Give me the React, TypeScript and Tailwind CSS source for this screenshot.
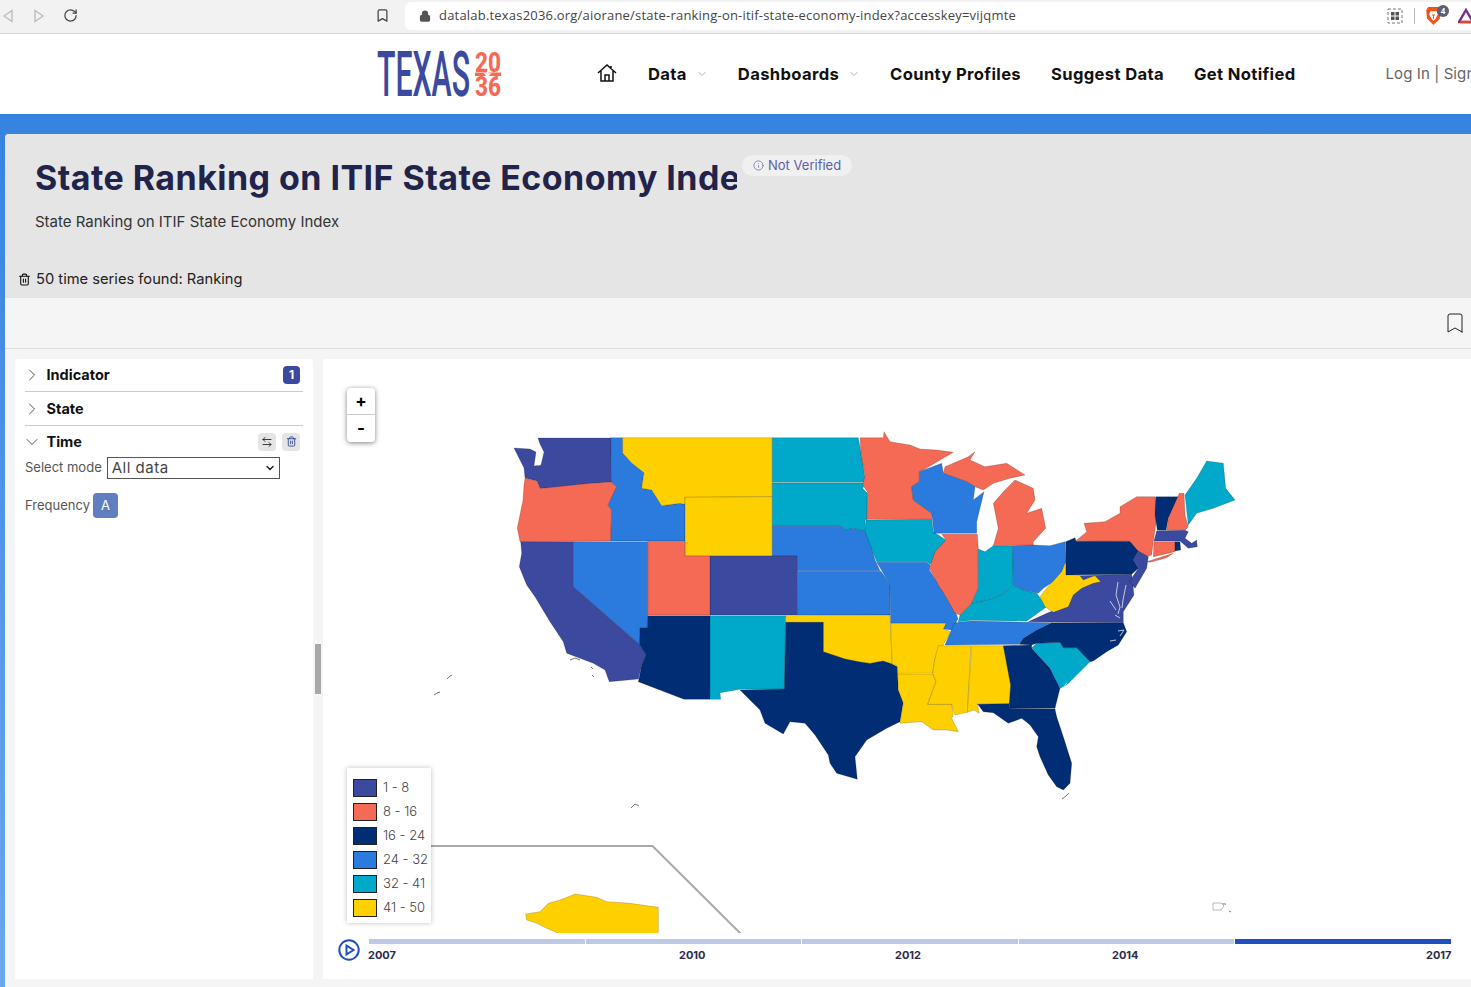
import React from "react";
import {
  ArrowLeftRight,
  Bookmark,
  ChevronDown,
  ChevronRight,
  Info,
  Lock,
  RotateCw,
  Trash2,
} from "lucide-react";

const INDIGO = "#3b4a9f";
const CORAL = "#f46a55";
const NAVY = "#002d74";
const BLUE = "#2b7bdf";
const TEAL = "#00a9c9";
const YELLOW = "#ffd000";

// state outlines in page pixels, the svg viewBox starts at the panel's corner
const states: [string, string][] = [
  [INDIGO, "538,438 611,438 611.7,482 587,484 567,487 540,488.5 537,481 525,478 524,468 520,460 514,448 530,449 536,452 534,466 541,465 544,452 540,444"],
  [CORAL, "525,478 537,481 540,488.5 587,483.5 611.7,482 617,487 608,505 611.7,510 610.7,541 520,541.7 517.3,528 523,500 524,485"],
  [BLUE, "610.7,437.7 622.7,437.7 622.7,453 631.7,463 644,472.7 641.7,488.3 651.7,490 661.7,505.7 680,503.3 685,504.3 685,541 610.7,541 611.7,510 608,505 616.7,486.7 611.7,482.3"],
  [YELLOW, "622.7,437.7 772.3,437.7 772.3,496.7 685,497.3 685,504.3 680,503.3 661.7,505.7 651.7,490 641.7,488.3 644,472.7 631.7,463 622.7,453"],
  [YELLOW, "685,497.3 772.3,496.7 772.3,556 685,556"],
  [TEAL, "772.3,437.7 858.3,437.7 861.7,456.7 865.7,482.3 772.3,482.3"],
  [TEAL, "772.3,483 865.7,483 862.7,488.3 867.3,493.3 867.3,519.3 865,520 866,531.7 853.3,528.3 846.7,530 840,526.3 772.3,526.3"],
  [BLUE, "772.3,526.3 840,526.3 846.7,530 853.3,528.3 866,531.7 870,541.7 875,560 880,570.7 797.3,570.7 797.3,556 772.3,556"],
  [INDIGO, "710,556 797.3,556 797.7,615 710,615"],
  [CORAL, "647.7,541.3 685,541.3 685,556 710,556 710,615 647.7,615"],
  [BLUE, "573.3,541.7 647.7,541.7 647.7,615 647.3,628 640,628 639.3,644.3 573.3,586.7"],
  [INDIGO, "520.7,541.7 573.3,541.7 573.3,586.7 639.3,644.3 646,655 641.7,665 638.3,679 609.3,681.7 605,670 593.3,663.3 566.7,653.3 563.3,641.7 550,621.7 535,596.7 526.7,585 519.3,566.7 521.7,553.3"],
  [NAVY, "647.7,615.7 710,615.7 710,699.3 684,699.3 638.3,681.7 641.7,665 646,655 639.3,644.3 640,628 647.3,628"],
  [TEAL, "710,615.7 785.7,615.7 784.3,689 740,689.3 720,692.7 720.7,699.3 710,699.3"],
  [BLUE, "797.3,571.3 881,571.3 885,577 890,585 890.3,615 797.7,615"],
  [YELLOW, "785.7,615.7 890,615 892,664 883,661 870,663.5 860,662 845,659 823.3,652 823.3,622.7 785.5,622.7"],
  [NAVY, "785.7,622.3 823.3,622.3 823.3,651.7 845,659 860,662 870,663.5 883,661 892,664 897.3,666.7 898.3,690 903.3,701.7 900,721.7 886.7,728.3 866.7,740 855,756.7 857.3,779.3 836.7,773.3 830,763.3 828.3,755 815,735 805,723.3 790,721.7 783.3,734 765,723.3 760,710 740,690 784.3,689"],
  [CORAL, "860,437.7 883.3,437.7 884,431.7 890,441.7 910,445 920,449 936.7,450 953.3,452.3 923.3,470 919.3,471.7 919.3,481.7 911.7,486.7 913.3,500 931.7,513.3 931.7,519.3 866.7,519.3 867.3,491.7 862.7,485 865,475 861,455"],
  [TEAL, "866,520 931.7,519.3 933.3,531.7 946,540 941.7,548.3 935,551.7 936,558.3 930,564.3 926.7,561.7 876.7,561.7 865,531.7"],
  [BLUE, "876.7,562.3 926.7,562.3 930,565 929.3,570 940,586.7 945,595 956.7,615 958,619 951.7,630 943.3,629 946,623.3 890.7,623.3 890,585 883.3,573.3"],
  [YELLOW, "890.7,623.3 946,623.3 943.3,629 950.7,631.7 943.3,645 935,658.3 932.7,673.3 897.7,673.3 897.3,665.7 892.3,664.3"],
  [YELLOW, "897.7,674 933.3,674.3 936,681.7 927.7,704.3 951.7,704.3 953.3,715 951.7,718.3 958.3,731.7 946.7,730 933.3,730 921.7,721.7 900,723.3 903.3,703.3 898.3,690"],
  [YELLOW, "938.3,645.7 971,645.7 967.3,712.3 955,715 951.7,704.3 927.7,704.3 936,681.7 932.7,673.3 935,658.3"],
  [YELLOW, "971.7,645.7 1003.3,645.7 1010.7,685 1009.3,703.7 977.3,704.3 979.3,713.3 974,710 967.3,712.3"],
  [NAVY, "1003.3,645.7 1031.7,645 1031.7,648.3 1050,668.3 1060,688.3 1055,708.3 1010,708.3 1009.3,703.7 1010.7,685"],
  [NAVY, "977.3,704.3 1009.3,703.7 1010,708.3 1055,709 1056.7,716.7 1063.3,736.7 1071.7,763.3 1070,783.3 1063.3,790 1056.7,786.7 1048.3,775 1040,756.7 1036.7,746.7 1038.3,736.7 1030,725 1021.7,718.3 1008.3,723.3 993.3,712.7 983.3,711.7 978.3,705"],
  [TEAL, "1031.7,647.7 1036.7,643.3 1060,642.3 1063.3,647.7 1076.7,647.7 1090,661.7 1081.7,670 1066.7,685 1060,688.3 1050,668.3"],
  [NAVY, "1051.7,622.7 1123.3,622.7 1126.7,631.7 1118.3,645 1106.7,651.7 1093.3,661 1090,661.7 1076.7,647.7 1063.3,647.7 1060,642.3 1036.7,643.3 1031.7,645 1019.3,644.3 1023.3,638.3 1036.7,630"],
  [BLUE, "958.3,622.3 971.7,621 1051.7,622.7 1036.7,630 1023.3,638.3 1019.3,644.3 945,645 950.7,631.7 954,623.3"],
  [TEAL, "958.3,621.7 960,615 971.7,603.3 993.3,598.3 1003.3,593.3 1013.3,585 1023.3,590 1036.7,593.3 1046.7,606.7 1026.7,621 971.7,620.3"],
  [CORAL, "941.7,534.3 977.3,534.3 978.3,548.3 978.3,588.3 971.7,603.3 960,615 955,613.3 945,595 939.3,586.7 929.3,568.3 935,551.7 946,540"],
  [TEAL, "978.3,549 985,551.7 993.3,545.7 1012.7,545.7 1013.3,585 1003.3,593.3 993.3,598.3 971.7,603.3 978.3,588.3"],
  [BLUE, "1012.7,545.7 1033.3,545 1050,545.7 1065,541.7 1065.7,561.7 1061.7,571.7 1053.3,581.7 1043.3,588.3 1038.3,593.3 1023.3,590 1013.3,585"],
  [CORAL, "993.3,545.7 998.3,528.3 993.3,503.3 1003.3,491.7 1015,480 1033.3,488.3 1035,500 1026.7,513.3 1041.7,508.3 1045.7,528.3 1033.3,541.7 1033.3,545"],
  [CORAL, "943.3,473.3 945,466.7 968.3,456.7 975,451.7 970,460 985,466.7 1006.7,463.3 1025,475 1010,478.3 993.3,483.3 983.3,490 975,486.7 966.7,481.7"],
  [BLUE, "919.3,471.7 941.7,463.3 943.3,473.3 966.7,481.7 975,486.7 973.3,500 984,491.7 976.7,521.7 976.7,533.3 934,533.3 931.7,513.3 913.3,500 911.7,486.7 919.3,481.7"],
  [INDIGO, "1079.3,575.7 1131.7,574.3 1134,595 1123.3,611.7 1123.3,622.7 1028.3,621.7 1046.7,613.3 1060,608"],
  [NAVY, "1065.7,541.7 1075,537.7 1076,541.3 1130,541.3 1138.3,551 1133.3,560 1138.3,568.3 1131.7,574.3 1065.7,575"],
  [CORAL, "1076,540.7 1086.7,531.7 1084,523.3 1105,521.7 1120,513.3 1120,506.7 1136.7,496.7 1155,496.7 1156.7,518.3 1153.3,541.7 1151.7,555 1146.7,556.7 1138.3,551 1130,541.3"],
  [CORAL, "1146.7,561.7 1173.3,553.3 1166.7,557.7 1150,562.3"],
  [NAVY, "1155.7,496.7 1178.3,496.7 1168.3,518.3 1166,530.3 1157.3,530.3 1155,515"],
  [CORAL, "1179.3,493.3 1184,493.3 1185,515 1188.3,526.7 1185,530.3 1166.7,530.3 1168.3,518.3"],
  [TEAL, "1185,495 1196.7,478.3 1206.7,461 1223.3,463.3 1225.7,488.3 1235,500 1213.3,508.3 1196.7,513.3 1188.3,525"],
  [INDIGO, "1156.7,531 1185,530.3 1188.3,531.7 1185,538.3 1191.7,543.3 1196.7,540 1197.3,546.7 1188.3,548.3 1180,541 1154,541"],
  [CORAL, "1154,541.7 1175,541.7 1175,551.7 1153.3,556.7"],
  [NAVY, "1175,541.7 1180,541.7 1180.7,550 1175,551"],
  [INDIGO, "1138.3,551 1148.3,556.7 1146.7,568.3 1135,588.3 1129.3,581.7 1138.3,568.3 1133.3,560"],
  [YELLOW, "1065.7,561.7 1065.7,575 1079.3,575 1083.3,580 1091.7,576.7 1095,575.7 1100.7,581.7 1093.3,583.3 1081.7,588.3 1073.3,595 1068.3,606.7 1053.3,612.3 1045,606.7 1040,596.7 1046.7,588.3 1061.7,571.7"],
  [YELLOW, "525.7,914 540,911.7 548.3,903.3 560,900 575,894 596.7,897.3 606.7,901.7 630,903.3 658.3,907.3 658.3,934 560,934 546.7,928.3 536.7,923.3 526.7,920"],
];

const specks = [
  "570,660 575,658 580,660",
  "591,667 593,669",
  "592,675 594,677",
  "447,679 450,676 452,675",
  "434,695 437,693 440,692",
  "631,808 635,804 639,806",
  "1222,904 1226,904",
  "1229,911 1231,912",
  "1062,799 1066,796 1069,793",
];

const coastCuts = [
  "1118,582 1116,595 1120,607 1118,614",
  "1126,585 1123,600 1122,608",
  "1110,601 1116,610",
  "1115,615 1120,618",
  "1118,631 1124,630 1120,636",
  "1110,641 1116,640",
  "540,446 542,452 537,458 539,466",
  "1067,683 1063,688",
];

const legend: [string, string][] = [
  [INDIGO, "1 - 8"],
  [CORAL, "8 - 16"],
  [NAVY, "16 - 24"],
  [BLUE, "24 - 32"],
  [TEAL, "32 - 41"],
  [YELLOW, "41 - 50"],
];

const navItems = [
  { label: "Data", drop: true },
  { label: "Dashboards", drop: true },
  { label: "County Profiles" },
  { label: "Suggest Data" },
  { label: "Get Notified" },
];

const UsMap = () => (
  <svg viewBox="323 359 1148 574" className="absolute inset-0 h-full w-full">
    <polyline
      points="431,846 652.5,846 741,934"
      fill="none"
      stroke="#a9a9a9"
      strokeWidth="2"
    />
    {states.map(([fill, points], i) => (
      <polygon
        key={i}
        points={points}
        fill={fill}
        stroke="#000"
        strokeOpacity="0.25"
        strokeWidth="0.7"
        strokeLinejoin="round"
      />
    ))}
    {coastCuts.map((points, i) => (
      <polyline
        key={i}
        points={points}
        fill="none"
        stroke="#fff"
        strokeWidth="0.7"
      />
    ))}
    {specks.map((points, i) => (
      <polyline
        key={i}
        points={points}
        fill="none"
        stroke="#666"
        strokeWidth="0.9"
      />
    ))}
    <path
      d="M1213 903h8l3 3-3 4h-8z"
      fill="none"
      stroke="#bbb"
      strokeWidth="1"
    />
  </svg>
);

const Logo = () => (
  <svg width="126" height="80" viewBox="0 0 126 80" className="shrink-0">
    <text
      x="0"
      y="62"
      fontFamily="Roboto, sans-serif"
      fontSize="63"
      fontWeight="500"
      fill="#3b4a9f"
      textLength="93"
      lengthAdjust="spacingAndGlyphs"
    >
      TEXAS
    </text>
    <text
      x="98"
      y="38"
      fontFamily="Roboto, sans-serif"
      fontSize="28"
      fontWeight="800"
      fill="#f46a55"
      textLength="26"
      lengthAdjust="spacingAndGlyphs"
    >
      20
    </text>
    <text
      x="98"
      y="62"
      fontFamily="Roboto, sans-serif"
      fontSize="28"
      fontWeight="800"
      fill="#f46a55"
      textLength="26"
      lengthAdjust="spacingAndGlyphs"
    >
      36
    </text>
    <rect x="98" y="38.5" width="26" height="3.5" fill="#f46a55" />
    <path
      d="M110.5 36.5l1.2 2.8h3l-2.4 1.8 1 3-2.8-1.8-2.8 1.8 1-3-2.4-1.8h3z"
      fill="#fff"
    />
  </svg>
);

const BrowserBar = () => (
  <div className="flex h-[34px] items-center overflow-hidden border-b border-[#d4d4d4] bg-[#f2f2f2] font-['Open_Sans',sans-serif]">
    <svg width="12" height="14" viewBox="0 0 12 14" className="ml-[2px] shrink-0 -translate-y-px">
      <path d="M10 1.5 2 7l8 5.5z" fill="none" stroke="#bdbdbd" strokeWidth="1.4" />
    </svg>
    <svg width="12" height="14" viewBox="0 0 12 14" className="ml-[19px] shrink-0 -translate-y-px">
      <path d="M2 1.5 10 7l-8 5.5z" fill="none" stroke="#bdbdbd" strokeWidth="1.4" />
    </svg>
    <RotateCw size={15} strokeWidth={2} className="ml-[18px] shrink-0 -translate-y-px text-[#444]" />
    <Bookmark size={15} strokeWidth={2} className="ml-[297px] shrink-0 -translate-y-px text-[#444]" />
    <div className="ml-[15px] flex h-[28px] min-w-0 flex-1 -translate-y-px items-center rounded-l-md bg-white pl-[14px]">
      <Lock size={12} strokeWidth={2.5} fill="currentColor" className="shrink-0 text-[#555]" />
      <span className="ml-[8px] w-[956px] shrink-0 text-[13px] tracking-[0.2px] whitespace-nowrap text-[#444]">
        datalab.texas2036.org/aiorane/state-ranking-on-itif-state-economy-index?accesskey=vijqmte
      </span>
      <svg width="16" height="16" viewBox="0 0 16 16" className="-ml-[8px] shrink-0">
        <rect x="1" y="1" width="14" height="14" fill="none" stroke="#777" strokeDasharray="3 2" />
        <rect x="4" y="4" width="3.5" height="3.5" fill="#555" />
        <rect x="8.5" y="4" width="3.5" height="3.5" fill="#555" />
        <rect x="4" y="8.5" width="3.5" height="3.5" fill="#555" />
        <rect x="8.5" y="8.5" width="3.5" height="3.5" fill="#555" />
      </svg>
      <div className="ml-[11px] h-[16px] w-px shrink-0 bg-[#bbb]" />
      <div className="relative ml-[10px] shrink-0">
        <svg width="17" height="20" viewBox="0 0 16 19" className="block">
          <path d="M3 1h10l2 3-1 8-6 6-6-6-1-8z" fill="#f2541b" />
          <path d="M5 5h6l1 3-2 4-2 2-2-2-2-4z" fill="#fff" />
          <path d="M6.5 8.5h3M8 9v3" stroke="#f2541b" strokeWidth="1" />
        </svg>
        <span className="absolute -top-[1px] left-[12px] flex h-[12px] w-[12px] items-center justify-center rounded-full bg-[#5a5f73] text-[8px] font-bold text-white">
          4
        </span>
      </div>
      <svg width="16" height="16" viewBox="0 0 16 16" className="ml-[16px] shrink-0">
        <path d="M8 2 15 14H1z" fill="none" stroke="#7b2d8e" strokeWidth="2.4" />
        <path d="M2 14h12" stroke="#e8452c" strokeWidth="2.4" />
      </svg>
    </div>
  </div>
);

const SiteHeader = () => (
  <header className="flex h-[80px] items-center overflow-hidden bg-white pl-[377px] font-['Inter',sans-serif] whitespace-nowrap">
    <Logo />
    <svg width="20" height="20" viewBox="0 0 20 20" className="ml-[94px] shrink-0 -translate-y-px">
      <path
        d="M1 10 10 2l9 8M4 8v10h12V8M8 18v-6h4v6M14 3v3"
        fill="none"
        stroke="#111"
        strokeWidth="1.5"
      />
    </svg>
    <nav className="ml-[31px] flex items-center gap-[30px] text-[16.6px] font-bold tracking-[0.35px] text-[#111]">
      {navItems.map((item) => (
        <div key={item.label} className="flex items-center">
          <span>{item.label}</span>
          {item.drop && (
            <ChevronDown size={12} strokeWidth={1.2} className="ml-[9px] text-[#777]" />
          )}
        </div>
      ))}
    </nav>
    <span className="ml-[90px] text-[15px] tracking-[0.1px] text-[#666]">
      Log In | Sign Up
    </span>
  </header>
);

const TitlePanel = () => (
  <section className="flex h-[164px] flex-col bg-[#e5e5e5] pl-[30px] text-[#1f2044]">
    <div className="flex items-start pt-[21px]">
      <h1 className="mt-[1px] w-[702px] overflow-hidden text-[34px] leading-[44px] font-bold tracking-[0.45px] whitespace-nowrap text-[#22234a]">
        State Ranking on ITIF State Economy Index
      </h1>
      <span className="ml-[5px] flex h-[21px] items-center gap-[4px] rounded-full bg-[#f0f0f0] px-[11px] text-[13px] text-[#5a60a8]">
        <Info size={11} strokeWidth={1.5} />
        Not Verified
      </span>
    </div>
    <p className="mt-[12px] text-[15px] leading-[20px] text-[#333]">
      State Ranking on ITIF State Economy Index
    </p>
    <div className="mt-[37px] -ml-[17px] flex items-center gap-[5px] text-[14.7px] leading-[20px] text-[#222]">
      <Trash2 size={13} strokeWidth={2} className="text-[#111]" />
      50 time series found: Ranking
    </div>
  </section>
);

const SidePanel = () => (
  <aside className="w-[298px] shrink-0 rounded-t bg-white px-[10px] text-[#111]">
    <div className="flex h-[33px] items-center border-b border-[#ccc]">
      <ChevronRight size={20} strokeWidth={1} className="-ml-[3px] text-[#333]" />
      <span className="ml-[4.5px] text-[14.5px] font-bold">Indicator</span>
      <span className="mr-[3px] ml-auto flex h-[18px] w-[17px] items-center justify-center rounded-sm bg-[#3b4a9f] text-[12px] font-bold text-white">
        1
      </span>
    </div>
    <div className="flex h-[34px] items-center border-b border-[#ccc]">
      <ChevronRight size={20} strokeWidth={1} className="-ml-[3px] text-[#333]" />
      <span className="ml-[4.5px] text-[14.5px] font-bold">State</span>
    </div>
    <div className="flex h-[31px] items-center">
      <ChevronDown size={20} strokeWidth={1} className="-ml-[3px] text-[#333]" />
      <span className="ml-[4.5px] text-[14.5px] font-bold">Time</span>
      <span className="ml-auto flex h-[18px] w-[18px] items-center justify-center rounded-sm bg-[#e5e5e5]">
        <ArrowLeftRight size={12} strokeWidth={1.6} />
      </span>
      <span className="mr-[3px] ml-[6px] flex h-[18px] w-[18px] items-center justify-center rounded-sm bg-[#e5e5e5]">
        <Trash2 size={11} strokeWidth={1.8} className="text-[#1f3f88]" />
      </span>
    </div>
    <div className="flex items-center">
      <span className="text-[13px] text-[#555]">Select mode</span>
      <div className="ml-[5px] flex h-[22px] w-[173px] items-center justify-between border border-[#555] pr-[3px] pl-[4px] text-[15px] tracking-[0.5px] text-[#444]">
        All data
        <ChevronDown size={12} strokeWidth={3} className="text-[#222]" />
      </div>
    </div>
    <div className="mt-[14px] flex items-center">
      <span className="text-[13px] text-[#555]">Frequency</span>
      <span className="ml-[3px] flex h-[25px] w-[25px] items-center justify-center rounded-sm bg-[#5f7fbf] text-[13px] text-white">
        A
      </span>
    </div>
  </aside>
);

const MapPanel = () => (
  <section className="flex-1 bg-white">
    <div className="relative h-[574px] overflow-hidden">
      <UsMap />
      <div className="absolute top-[29px] left-[24px] w-[28px] rounded-sm bg-white text-black shadow-[0_1px_5px_rgba(0,0,0,0.5)]">
        <div className="flex h-[27px] items-center justify-center border-b border-[#ccc] text-[17px] leading-none font-bold">
          +
        </div>
        <div className="flex h-[27px] items-center justify-center text-[17px] leading-none font-bold">
          -
        </div>
      </div>
      <div className="absolute top-[409px] left-[24px] flex h-[155px] w-[84px] flex-col gap-[6px] bg-white pt-[11px] pl-[6px] shadow-[0_0_5px_rgba(0,0,0,0.25)]">
        {legend.map(([color, label]) => (
          <div key={label} className="flex h-[18px] items-center gap-[6px]">
            <span
              className="h-[18px] w-[24px] border border-[#222]"
              style={{ backgroundColor: color }}
            />
            <span className="text-[13px] font-light text-[#444]">{label}</span>
          </div>
        ))}
      </div>
    </div>
    <div className="flex pl-[15px]">
      <svg width="22" height="22" viewBox="0 0 22 22" className="mt-[6px] shrink-0">
        <circle cx="11" cy="11" r="9.7" fill="none" stroke="#1f4fbd" strokeWidth="2" />
        <path d="M8.5 6.5 15.5 11l-7 4.5z" fill="none" stroke="#1f4fbd" strokeWidth="2" />
      </svg>
      <div className="ml-[9px] w-[1082px] pt-[6px]">
        <div className="flex h-[5px] gap-[1px]">
          <div className="flex-1 bg-[#bdcae5]" />
          <div className="flex-1 bg-[#bdcae5]" />
          <div className="flex-1 bg-[#bdcae5]" />
          <div className="flex-1 bg-[#bdcae5]" />
          <div className="flex-1 bg-[#1f4fbd]" />
        </div>
        <div className="mt-[4px] -ml-px flex text-[11px] leading-[14px] font-bold text-[#2b2b4a]">
          <span className="w-[29px]">2007</span>
          <span className="ml-[283px] w-[26px]">2010</span>
          <span className="ml-[190px] w-[26px]">2012</span>
          <span className="ml-[191px] w-[26px]">2014</span>
          <span className="ml-[288px] w-[26px]">2017</span>
        </div>
      </div>
    </div>
  </section>
);

export default function App() {
  return (
    <div className="h-[987px] w-[1471px] overflow-hidden bg-white font-['Inter',sans-serif]">
      <BrowserBar />
      <SiteHeader />
      <div className="h-[873px] bg-linear-to-b from-[#3583e0] to-[#6aa8ee] pt-[20px] pl-[5px]">
        <main className="h-[853px] overflow-hidden rounded-tl bg-[#f5f5f5]">
          <TitlePanel />
          <div className="flex h-[51px] items-center justify-end border-b border-[#ddd] pr-[4px]">
            <Bookmark size={24} strokeWidth={1} className="text-[#222]" />
          </div>
          <div className="flex h-[630px] pt-[10px] pl-[10px]">
            <SidePanel />
            <div className="flex w-[10px] shrink-0 items-center justify-center">
              <div className="h-[50px] w-[6px] bg-[#a8a8a8]" />
            </div>
            <MapPanel />
          </div>
        </main>
      </div>
    </div>
  );
}
